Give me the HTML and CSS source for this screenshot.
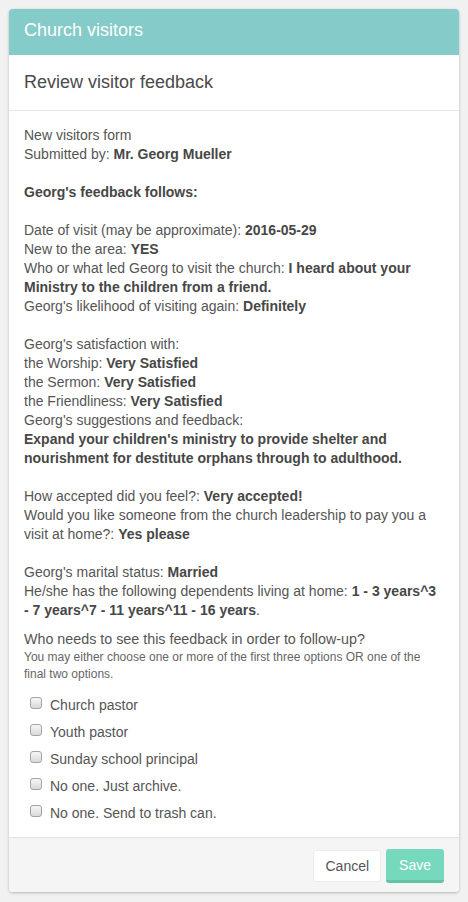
FILE: index.html
```html
<!DOCTYPE html>
<html>
<head lang="en">
    <meta charset="UTF-8">
    <title>Church visitors</title>
    <link rel="stylesheet" href="styles.css">
</head>
<body>
<div class="card">
    <div class="card_head">Church visitors</div>
    <div class="card_title">Review visitor feedback</div>
    <div class="card_body">
        <div class="feedback">
            New visitors form<br>
            Submitted by: <b>Mr. Georg Mueller</b><br>
            <br>
            <b>Georg's feedback follows:</b><br>
            <br>
            Date of visit (may be approximate): <b>2016-05-29</b><br>
            New to the area: <b>YES</b><br>
            Who or what led Georg to visit the church: <b>I heard about your Ministry to the children from a friend.</b><br>
            Georg's likelihood of visiting again: <b>Definitely</b><br>
            <br>
            Georg's satisfaction with:<br>
            the Worship: <b>Very Satisfied</b><br>
            the Sermon: <b>Very Satisfied</b><br>
            the Friendliness: <b>Very Satisfied</b><br>
            Georg's suggestions and feedback:<br>
            <b>Expand your children's ministry to provide shelter and nourishment for destitute orphans through to adulthood.</b><br>
            <br>
            How accepted did you feel?: <b>Very accepted!</b><br>
            Would you like someone from the church leadership to pay you a visit at home?: <b>Yes please</b><br>
            <br>
            Georg's marital status: <b>Married</b><br>
            He/she has the following dependents living at home: <b>1 - 3 years^3 - 7 years^7 - 11 years^11 - 16 years</b>.
        </div>
        <div class="question">Who needs to see this feedback in order to follow-up?</div>
        <div class="hint">You may either choose one or more of the first three options OR one of the final two options.</div>
        <ul class="options">
            <li><span class="box"></span>Church pastor</li>
            <li><span class="box"></span>Youth pastor</li>
            <li><span class="box"></span>Sunday school principal</li>
            <li><span class="box"></span>No one. Just archive.</li>
            <li><span class="box"></span>No one. Send to trash can.</li>
        </ul>
    </div>
    <div class="card_foot">
        <button class="btn btn_cancel">Cancel</button>
        <button class="btn btn_save">Save</button>
    </div>
</div>
</body>
</html>
```

FILE: styles.css
```css
* {
    margin: 0;
    padding: 0;
    box-sizing: border-box;
}
body {
    padding: 9px;
    background-color: #f1f1f1;
    font-family: "Liberation Sans", Arial, sans-serif;
    color: #555;
}
.card {
    width: 450px;
    background-color: #fff;
    border-radius: 4px;
    box-shadow: 0 1px 3px rgba(0, 0, 0, 0.25);
    overflow: hidden;
}
.card_head {
    height: 46px;
    line-height: 43px;
    padding: 0 15px;
    background-color: #85cbc9;
    color: #fff;
    font-size: 18px;
}
.card_title {
    height: 56px;
    line-height: 54px;
    padding: 0 15px;
    border-bottom: 1px solid #e8e8e8;
    font-size: 18px;
    color: #4a4a4a;
}
.card_body {
    padding: 15px 15px 15px;
}
.feedback {
    font-size: 14px;
    line-height: 19px;
}
.feedback b {
    color: #474747;
}
.question {
    margin-top: 10px;
    font-size: 14.3px;
    line-height: 19px;
}
.hint {
    font-size: 12px;
    line-height: 17px;
    color: #666;
}
.options {
    list-style: none;
    margin-top: 12px;
}
.options li {
    display: flex;
    align-items: center;
    height: 19px;
    margin-bottom: 8px;
    padding-left: 6px;
    font-size: 14px;
}
.options li:last-child {
    margin-bottom: 0;
}
.box {
    width: 12px;
    height: 12px;
    margin-top: -3px;
    margin-right: 8px;
    border: 1px solid #a4a4a4;
    border-radius: 3px;
    background: linear-gradient(#f6f6f6, #d9d9d9);
}
.card_foot {
    display: flex;
    justify-content: flex-end;
    gap: 5px;
    padding: 11px 15px 9px;
    border-top: 1px solid #e3e3e3;
    background-color: #f5f5f5;
}
.btn {
    height: 33px;
    padding: 0 11px;
    border-radius: 3px;
    font-family: "Liberation Sans", Arial, sans-serif;
    font-size: 14px;
    outline: none;
}
.btn_cancel {
    height: 32px;
    margin-top: 1px;
    background-color: #fff;
    color: #555;
    border: 1px solid #ececec;
}
.btn_save {
    height: 34px;
    padding: 0 13px;
    background-color: #76d9bd;
    color: #fff;
    border: none;
    border-bottom: 3px solid #62c4a6;
}
```
